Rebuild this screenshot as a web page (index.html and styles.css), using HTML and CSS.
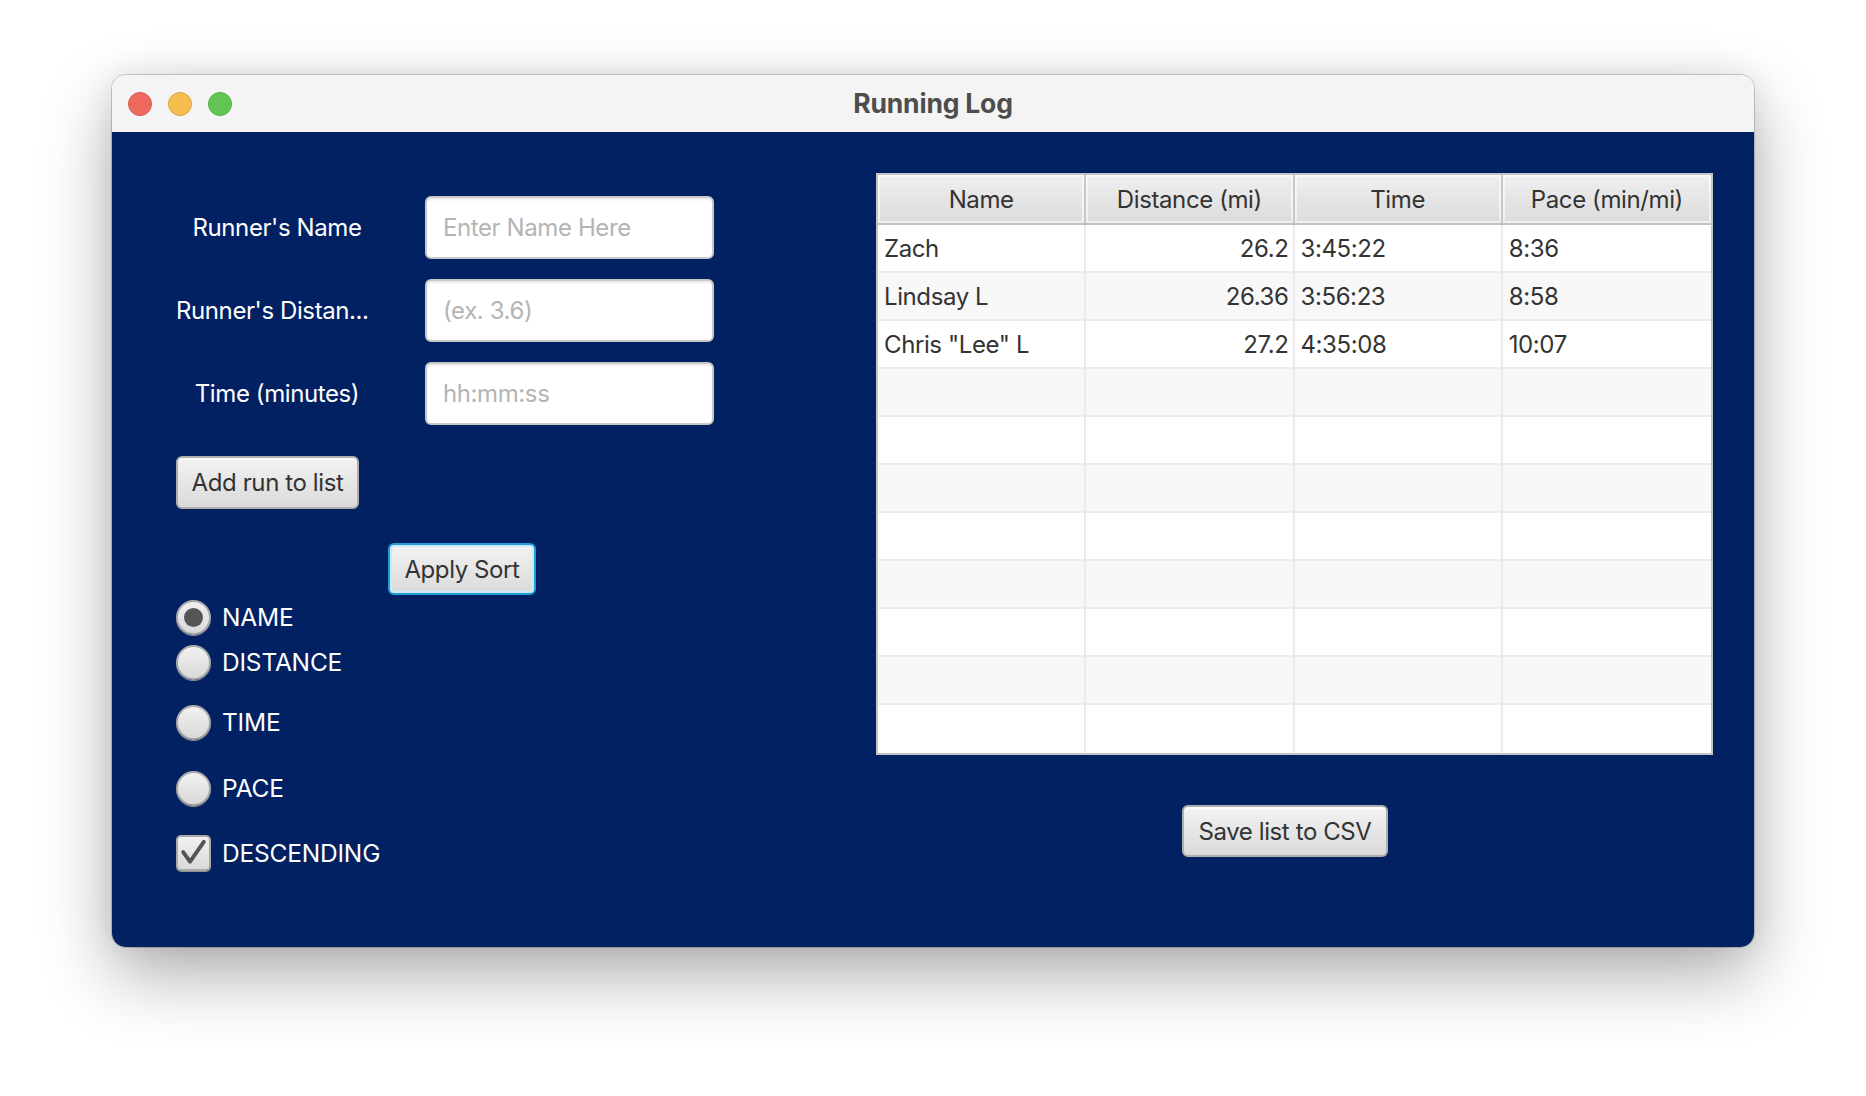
FILE: index.html
```html
<!DOCTYPE html>
<html>
<head>
<meta charset="utf-8">
<link rel="stylesheet" href="styles.css">
</head>
<body>
<div class="window">
  <div class="titlebar">
    <div class="lights">
      <span class="light red"></span>
      <span class="light yellow"></span>
      <span class="light green"></span>
    </div>
    <div class="title">Running Log</div>
    <div></div>
  </div>
  <div class="content">
    <div class="left">
      <div class="form">
        <div class="label">Runner's Name</div>
        <input class="field" type="text" placeholder="Enter Name Here">
        <div class="label label-fill">Runner's Distan...</div>
        <input class="field" type="text" placeholder="(ex. 3.6)">
        <div class="label">Time (minutes)</div>
        <input class="field" type="text" placeholder="hh:mm:ss">
      </div>
      <button class="btn btn-add">Add run to list</button>
      <button class="btn btn-sort">Apply Sort</button>
      <div class="opt opt-name"><span class="radio checked"><span class="dot"></span></span><span class="opt-label">NAME</span></div>
      <div class="opt opt-dist"><span class="radio"></span><span class="opt-label">DISTANCE</span></div>
      <div class="opt opt-time"><span class="radio"></span><span class="opt-label">TIME</span></div>
      <div class="opt opt-pace"><span class="radio"></span><span class="opt-label">PACE</span></div>
      <div class="opt opt-desc"><span class="check"><svg viewBox="0 0 36 36" width="32" height="32"><path d="M6 17 L14 28 L30 5" fill="none" stroke="#555" stroke-width="4.5" stroke-linecap="round" stroke-linejoin="round"/></svg></span><span class="opt-label">DESCENDING</span></div>
    </div>
    <div class="right">
      <div class="table">
        <div class="thead">
          <div class="th">Name</div>
          <div class="th">Distance (mi)</div>
          <div class="th">Time</div>
          <div class="th">Pace (min/mi)</div>
        </div>
        <div class="tr"><div class="td">Zach</div><div class="td num">26.2</div><div class="td">3:45:22</div><div class="td">8:36</div></div>
        <div class="tr"><div class="td">Lindsay L</div><div class="td num">26.36</div><div class="td">3:56:23</div><div class="td">8:58</div></div>
        <div class="tr"><div class="td">Chris "Lee" L</div><div class="td num">27.2</div><div class="td">4:35:08</div><div class="td">10:07</div></div>
        <div class="tr"><div class="td"></div><div class="td"></div><div class="td"></div><div class="td"></div></div>
        <div class="tr"><div class="td"></div><div class="td"></div><div class="td"></div><div class="td"></div></div>
        <div class="tr"><div class="td"></div><div class="td"></div><div class="td"></div><div class="td"></div></div>
        <div class="tr"><div class="td"></div><div class="td"></div><div class="td"></div><div class="td"></div></div>
        <div class="tr"><div class="td"></div><div class="td"></div><div class="td"></div><div class="td"></div></div>
        <div class="tr"><div class="td"></div><div class="td"></div><div class="td"></div><div class="td"></div></div>
        <div class="tr"><div class="td"></div><div class="td"></div><div class="td"></div><div class="td"></div></div>
        <div class="tr"><div class="td"></div><div class="td"></div><div class="td"></div><div class="td"></div></div>
      </div>
      <button class="btn btn-save">Save list to CSV</button>
    </div>
  </div>
</div>
</body>
</html>
```

FILE: styles.css
```css
html, body {
  margin: 0;
  padding: 0;
  background: #ffffff;
}
body {
  width: 1866px;
  height: 1096px;
  overflow: hidden;
  font-family: "Inter", "Noto Sans", sans-serif;
}
.window {
  margin-left: 112px;
  margin-top: 75px;
  width: 1642px;
  height: 872px;
  border-radius: 14px;
  overflow: hidden;
  box-shadow: 0 0 0 1px rgba(0, 0, 0, 0.18), 0 28px 70px rgba(0, 0, 0, 0.32), 0 0 30px rgba(0, 0, 0, 0.08);
  display: flex;
  flex-direction: column;
}
.titlebar {
  height: 57px;
  flex: none;
  background: #f4f4f4;
  display: grid;
  grid-template-columns: 1fr auto 1fr;
  align-items: center;
}
.lights {
  display: flex;
  gap: 16px;
  padding-left: 16px;
}
.light {
  width: 24px;
  height: 24px;
  border-radius: 50%;
  box-sizing: border-box;
}
.red { background: #ee6a5f; border: 1px solid #d85a50; }
.yellow { background: #f5bf4f; border: 1px solid #d9a441; }
.green { background: #62c554; border: 1px solid #52ab46; }
.title {
  font-weight: 700;
  font-size: 26.5px;
  color: #4d4d4d;
  letter-spacing: -0.2px;
  margin-top: -2px;
}
.content {
  flex: 1;
  background: #012163;
  display: flex;
}
.left {
  width: 764px;
  flex: none;
  box-sizing: border-box;
  padding-left: 64px;
  padding-top: 64px;
  display: flex;
  flex-direction: column;
  align-items: flex-start;
}
.form {
  display: grid;
  grid-template-columns: 202px 289px;
  grid-auto-rows: 63px;
  column-gap: 47px;
  row-gap: 20px;
}
.label {
  color: #ffffff;
  font-size: 24px;
  letter-spacing: -0.4px;
  text-align: center;
  align-self: center;
  white-space: nowrap;
}
.label-fill {
  text-align: left;
}
.field {
  box-sizing: border-box;
  width: 289px;
  height: 63px;
  border: 2px solid #c8c8c8;
  border-radius: 6px;
  background: #ffffff;
  box-shadow: inset 0 2px 2px rgba(0, 0, 0, 0.08);
  padding: 0 16px;
  font-family: "Inter", "Noto Sans", sans-serif;
  font-size: 24px;
  letter-spacing: -0.4px;
  color: #333;
  outline: none;
}
.field::placeholder {
  color: #b4b4b4;
}
.btn {
  box-sizing: border-box;
  font-family: "Inter", "Noto Sans", sans-serif;
  font-size: 24px;
  letter-spacing: -0.4px;
  color: #333333;
  background: linear-gradient(#f3f3f3, #dadada);
  border: 2px solid #aeaeae;
  border-radius: 6px;
  box-shadow: inset 0 2px 0 #fbfbfb;
  padding: 0;
}
.btn-add {
  width: 183px;
  height: 53px;
  margin-top: 31px;
}
.btn-sort {
  width: 148px;
  height: 52px;
  margin-top: 34px;
  margin-left: 212px;
  border-color: #1f9ed8;
  box-shadow: inset 0 0 0 2px #cfe9f6;
}
.opt {
  display: flex;
  align-items: center;
  gap: 11px;
  height: 36px;
}
.opt-name { margin-top: 4px; }
.opt-dist { margin-top: 9px; }
.opt-time { margin-top: 24px; }
.opt-pace { margin-top: 30px; }
.opt-desc { margin-top: 29px; }
.opt-label {
  color: #ffffff;
  font-size: 24.5px;
  letter-spacing: -0.2px;
}
.radio {
  box-sizing: border-box;
  width: 35px;
  height: 35px;
  border-radius: 50%;
  border: 2px solid #a9a9a9;
  background: linear-gradient(#f1f1f1, #d9d9d9);
  box-shadow: 0 1px 0 #8f8f8f;
  display: flex;
  align-items: center;
  justify-content: center;
}
.dot {
  width: 19px;
  height: 19px;
  border-radius: 50%;
  background: #555555;
}
.check {
  box-sizing: border-box;
  width: 35px;
  height: 36px;
  border-radius: 5px;
  border: 2px solid #a9a9a9;
  background: linear-gradient(#f1f1f1, #d9d9d9);
  box-shadow: 0 1px 0 #8f8f8f;
  display: flex;
  align-items: center;
  justify-content: center;
}
.right {
  padding-top: 41px;
  display: flex;
  flex-direction: column;
  align-items: flex-start;
}
.table {
  width: 837px;
  box-sizing: border-box;
  border: 2px solid #c4c4c4;
  background: #ffffff;
}
.thead {
  display: grid;
  grid-template-columns: repeat(4, 1fr);
  height: 50px;
  box-sizing: border-box;
  border-bottom: 2px solid #c2c2c2;
}
.th {
  background: linear-gradient(#efefef, #dcdcdc);
  border-right: 2px solid #c8c8c8;
  box-shadow: inset 0 0 0 2px rgba(255, 255, 255, 0.55);
  display: flex;
  align-items: center;
  justify-content: center;
  font-size: 24px;
  letter-spacing: -0.4px;
  color: #333333;
  padding-top: 1px;
}
.th:last-child { border-right: none; }
.tr {
  display: grid;
  grid-template-columns: repeat(4, 1fr);
  height: 48px;
  box-sizing: border-box;
  border-bottom: 2px solid #ebebeb;
  background: #ffffff;
}
.tr:nth-child(odd) { background: #f8f8f8; }
.tr:last-child { border-bottom: none; }
.td {
  border-right: 2px solid #ebebeb;
  display: flex;
  align-items: center;
  padding: 0 6px;
  font-size: 24px;
  letter-spacing: -0.4px;
  color: #333333;
  white-space: nowrap;
}
.td:last-child { border-right: none; }
.td.num {
  justify-content: flex-end;
  padding-right: 4px;
}
.btn-save {
  width: 206px;
  height: 52px;
  margin-top: 50px;
  margin-left: 306px;
}
```
